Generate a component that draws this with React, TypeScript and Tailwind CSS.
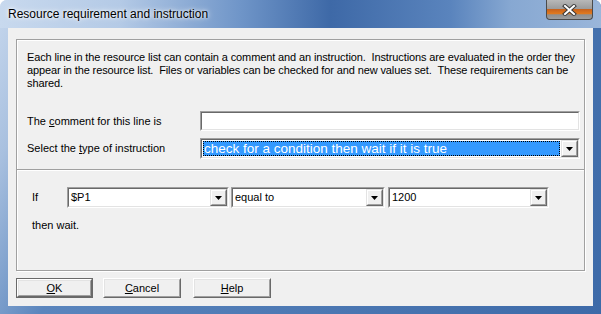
import React from "react";

function Arrow() {
	return (
		<div className="w-[17px] h-full bg-[#f0f0f0] border border-t-[#e3e3e3] border-l-[#e3e3e3] border-b-[#696969] border-r-[#696969]">
			<div className="w-full h-full flex items-center justify-center border border-t-white border-l-white border-b-[#a0a0a0] border-r-[#a0a0a0]">
				<svg width="7" height="4" viewBox="0 0 7 4">
					<path d="M0 0H7L3.5 4Z" fill="#000" />
				</svg>
			</div>
		</div>
	);
}

function Sunken({ className, children }: { className: string; children?: React.ReactNode }) {
	return (
		<div className={`border border-t-[#a0a0a0] border-l-[#a0a0a0] border-b-white border-r-white ${className}`}>
			<div className="w-full h-full bg-white flex border border-t-[#696969] border-l-[#696969] border-b-[#e3e3e3] border-r-[#e3e3e3]">
				{children}
			</div>
		</div>
	);
}

function Combo({ className, value }: { className: string; value: string }) {
	return (
		<Sunken className={className}>
			<div className="flex-1 pl-[2px] leading-[17px]">{value}</div>
			<Arrow />
		</Sunken>
	);
}

function Button({ mnemonic, rest, isDefault, className }: { mnemonic: string; rest: string; isDefault?: boolean; className: string }) {
	return (
		<div className={`h-[20px] ${isDefault ? "border border-[#696969]" : ""} ${className}`}>
			<div className="w-full h-full bg-[#f0f0f0] border border-t-white border-l-white border-b-[#696969] border-r-[#696969]">
				<div className="w-full h-full flex items-center justify-center border border-t-[#e3e3e3] border-l-[#e3e3e3] border-b-[#a0a0a0] border-r-[#a0a0a0]">
					<span>
						<span className="underline underline-offset-[1px]">{mnemonic}</span>
						{rest}
					</span>
				</div>
			</div>
		</div>
	);
}

export default function App() {
	return (
		<div className="w-[601px] h-[314px] flex flex-col rounded-t-[7px] overflow-hidden bg-[linear-gradient(115deg,#c6d7ed_0%,#a8c0df_10%,#5a85bd_25%,#3d6aa8_100%)] font-['Liberation_Sans',Arial,sans-serif] text-[11px] text-black">
			{/* title bar */}
			<div className="relative h-[28px] shrink-0 bg-[linear-gradient(90deg,#c8d9ee_0%,#b4cae6_20%,#6f95c8_40%,#3e69a7_55%,#5a84bd_75%,#87a8d2_85%,#9ab6da_100%)]">
				<div className="absolute left-[8px] top-[6px] text-[12px] leading-[16px] [text-shadow:0_0_6px_#fff,0_0_3px_#fff]">
					Resource requirement and instruction
				</div>
				<div className="absolute right-[8px] top-0 w-[47px] h-[20px] rounded-b-[4px] border border-t-0 border-[#4b4b4b] bg-[linear-gradient(#b8b8b8_0%,#9c9c9c_45%,#c9631c_50%,#e07a1f_72%,#8f8f8f_78%,#9d9d9d_100%)] flex items-center justify-center">
					<svg width="15" height="12" viewBox="0 0 15 12">
						<path d="M3 2L12 10M12 2L3 10" stroke="#3a3a3a" strokeWidth="4" strokeLinecap="square" />
						<path d="M3 2L12 10M12 2L3 10" stroke="#fff" strokeWidth="2" strokeLinecap="square" />
					</svg>
				</div>
			</div>

			{/* client area */}
			<div className="mx-[8px] mb-[8px] flex-1 bg-[#f0f0f0] flex flex-col">
				<div className="ml-[8px] mt-[11px] w-[569px] border border-[#a0a0a0] shadow-[inset_1px_1px_0_#fff,1px_1px_0_#fff]">
					<div className="h-[129px] pl-[10px] pt-[11px]">
						<p className="leading-[13px] w-[557px] tracking-[-0.12px]">
							Each line in the resource list can contain a comment and an instruction.&nbsp; Instructions are evaluated in the order they appear in the resource list.&nbsp; Files or variables can be checked for and new values set.&nbsp; These requirements can be shared.
						</p>
						<div className="mt-[21px] flex items-center">
							<div className="w-[173px]">
								The <span className="underline underline-offset-[1px]">c</span>omment for this line is
							</div>
							<Sunken className="w-[380px] h-[20px]" />
						</div>
						<div className="mt-[7px] flex items-center">
							<div className="w-[173px]">
								Select the <span className="underline underline-offset-[1px]">t</span>ype of instruction
							</div>
							<Sunken className="w-[380px] h-[21px]">
								<div className="flex-1 m-[1px] bg-[#3399ff] text-white text-[13.5px] outline-1 outline-dotted outline-[#000] -outline-offset-1 pl-[1px] leading-[15px]">
									check for a condition then wait if it is true
								</div>
								<Arrow />
							</Sunken>
						</div>
					</div>
					<div className="h-px bg-[#a0a0a0]" />
					<div className="h-[100px] border-t border-white pl-[15px] pt-[16px]">
						<div className="flex items-center">
							<div className="w-[35px]">If</div>
							<Combo className="w-[162px] h-[21px]" value="$P1" />
							<Combo className="ml-[2px] w-[154px] h-[21px]" value="equal to" />
							<Combo className="ml-[3px] w-[161px] h-[21px]" value="1200" />
						</div>
						<div className="mt-[11px] leading-[13px]">then wait.</div>
					</div>
				</div>

				<div className="mt-[7px] flex">
					<Button className="ml-[8px] w-[77px]" mnemonic="O" rest="K" isDefault />
					<Button className="ml-[10px] w-[78px]" mnemonic="C" rest="ancel" />
					<Button className="ml-[12px] w-[78px]" mnemonic="H" rest="elp" />
				</div>
			</div>
		</div>
	);
}
